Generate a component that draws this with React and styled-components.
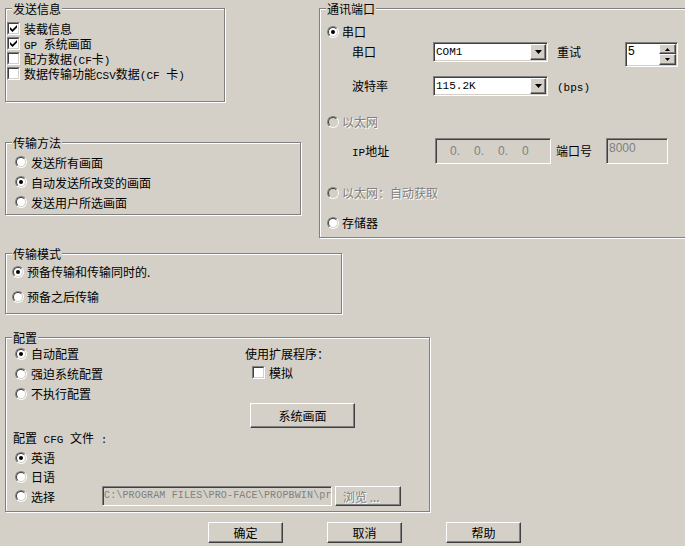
import React from 'react';
import styled, { createGlobalStyle, css } from 'styled-components';

const BG = '#d4d0c8';

const Global = createGlobalStyle`
  html, body { margin: 0; padding: 0; background: ${BG}; }
  body {
    font-family: "Noto Sans CJK SC", "Liberation Sans", sans-serif;
    font-size: 12px;
    color: #000;
  }
  * { box-sizing: border-box; }
`;

const Page = styled.div`
  width: 685px;
  height: 546px;
  overflow: hidden;
  padding: 8px 0 0 5px;
  display: flex;
  flex-direction: column;
  align-items: flex-start;
`;

const TopRow = styled.div`
  display: flex;
  align-items: flex-start;
  flex: none;
`;

const LeftCol = styled.div`
  display: flex;
  flex-direction: column;
  width: 296px;
  flex: none;
`;

const Group = styled.div`
  flex: none;
  width: ${p => p.$w}px;
  height: ${p => p.$h}px;
  margin-top: ${p => p.$mt || 0}px;
  margin-left: ${p => p.$ml || 0}px;
  border: 1px solid #808080;
  box-shadow: inset 1px 1px 0 #fff, 1px 1px 0 #fff;
  display: flex;
  flex-direction: column;
  align-items: flex-start;
`;

const Legend = styled.div`
  align-self: flex-start;
  margin: -8px 0 0 6px;
  padding: 0 1px;
  height: 15px;
  line-height: 15px;
  background: ${BG};
  white-space: nowrap;
`;

const List = styled.div`
  display: flex;
  flex-direction: column;
  gap: ${p => p.$gap || 0}px;
  padding: ${p => p.$pad || '0'};
`;

const Option = styled.label`
  display: flex;
  align-items: center;
  flex: none;
  gap: ${p => (p.$gap ?? 4)}px;
  height: ${p => p.$h || 15}px;
  width: ${p => (p.$w ? `${p.$w}px` : 'auto')};
  margin: ${p => p.$m || '0'};
  white-space: nowrap;
  color: ${p => (p.$disabled ? '#808080' : '#000')};
  text-shadow: ${p => (p.$disabled ? '1px 1px 0 #fff' : 'none')};
`;

const Text = styled.span`
  display: inline-block;
  height: 15px;
  line-height: 15px;
  overflow: hidden;
  white-space: nowrap;
`;

const Lat = styled.span`
  font-family: "Liberation Mono", monospace;
  font-size: 11px;
`;

const RadioOuter = styled.span`
  flex: none;
  width: 12px;
  height: 12px;
  border-radius: 50%;
  border: 1px solid;
  border-color: #808080 #fff #fff #808080;
  display: flex;
`;

const RadioInner = styled.span`
  flex: 1;
  border-radius: 50%;
  border: 1px solid;
  border-color: #404040 ${BG} ${BG} #404040;
  background: ${p => (p.$disabled ? BG : '#fff')};
  display: flex;
  align-items: center;
  justify-content: center;
`;

const Dot = styled.span`
  width: 4px;
  height: 4px;
  border-radius: 50%;
  background: #000;
`;

const CheckOuter = styled.span`
  flex: none;
  width: 13px;
  height: 13px;
  border: 1px solid;
  border-color: #808080 #fff #fff #808080;
  display: flex;
`;

const CheckInner = styled.span`
  flex: 1;
  border: 1px solid;
  border-color: #404040 ${BG} ${BG} #404040;
  background: #fff;
  display: flex;
  align-items: center;
  justify-content: center;
`;

const sunken = css`
  border: 1px solid;
  border-color: #808080 #fff #fff #808080;
  box-shadow: inset 1px 1px 0 #404040, inset -1px -1px 0 ${BG};
`;

const raised = css`
  border: 1px solid;
  border-color: #fff #404040 #404040 #fff;
  box-shadow: inset -1px -1px 0 #808080;
  background: ${BG};
`;

const Field = styled.div`
  ${sunken};
  flex: none;
  width: ${p => p.$w}px;
  height: ${p => p.$h}px;
  margin-left: ${p => p.$ml || 0}px;
  background: ${p => (p.$disabled ? BG : '#fff')};
  padding: 1px;
  display: flex;
  overflow: hidden;
`;

const ComboText = styled.div`
  flex: 1;
  padding-left: 1px;
  font-family: "Liberation Mono", monospace;
  font-size: 11px;
  line-height: 16px;
`;

const DropBtn = styled.div`
  ${raised};
  flex: none;
  width: 16px;
  height: 16px;
  display: flex;
  align-items: center;
  justify-content: center;
`;

const SpinText = styled.div`
  flex: 1;
  padding: 1px 0 0 1px;
  font-family: "Liberation Sans", sans-serif;
  font-size: 12px;
  line-height: 13px;
`;

const SpinBtns = styled.div`
  flex: none;
  width: 17px;
  display: flex;
  flex-direction: column;
`;

const SpinBtn = styled.div`
  ${raised};
  height: ${p => p.$h}px;
  display: flex;
  align-items: center;
  justify-content: center;
`;

const GrayText = styled.div`
  color: #808080;
  font-family: "Liberation Sans", sans-serif;
  font-size: 12px;
  line-height: 14px;
  padding: ${p => p.$pad || '0'};
  white-space: nowrap;
`;

const IpSegs = styled.div`
  display: flex;
  align-items: center;
  padding-left: 13px;
`;

const IpSeg = styled.span`
  width: 24px;
  color: #808080;
  font-family: "Liberation Sans", sans-serif;
  font-size: 12px;
  line-height: 20px;
`;

const PathText = styled.div`
  color: #808080;
  font-family: "Liberation Mono", monospace;
  font-size: 10px;
  letter-spacing: 0.15px;
  line-height: 16px;
  white-space: nowrap;
`;

const FieldRow = styled.div`
  display: flex;
  align-items: ${p => p.$align || 'flex-start'};
  margin: ${p => p.$m || '0'};
  flex: none;
`;

const FieldLabel = styled.div`
  flex: none;
  width: ${p => (p.$w ? `${p.$w}px` : 'auto')};
  margin-left: ${p => p.$ml || 0}px;
  height: 20px;
  line-height: 20px;
  white-space: nowrap;
`;

const Button = styled.button`
  ${raised};
  flex: none;
  width: ${p => p.$w}px;
  height: ${p => p.$h}px;
  margin: ${p => p.$m || '0'};
  padding: ${p => p.$pad || '0'};
  font-family: "Noto Sans CJK SC", sans-serif;
  font-size: 12px;
  color: ${p => (p.$disabled ? '#808080' : '#000')};
  text-shadow: ${p => (p.$disabled ? '1px 1px 0 #fff' : 'none')};
  display: flex;
  align-items: center;
  justify-content: ${p => p.$justify || 'center'};
  line-height: 15px;
  border-radius: 0;
  cursor: default;
`;

const ConfigTop = styled.div`
  display: grid;
  grid-template-columns: 239px auto;
  align-items: start;
  margin-top: 1px;
`;

const ExtPanel = styled.div`
  display: flex;
  flex-direction: column;
  align-items: flex-start;
`;

const PlainLabel = styled.div`
  height: 15px;
  line-height: 15px;
  margin: ${p => p.$m || '0'};
  white-space: nowrap;
`;

const CfgList = styled.div`
  display: flex;
  flex-direction: column;
  padding-left: 9px;
  margin-top: 3px;
`;

const PathRow = styled.div`
  display: flex;
  align-items: center;
  height: 20px;
`;

const ButtonRow = styled.div`
  display: flex;
  gap: 44px;
  margin: 10px 0 0 203px;
`;

const Radio = ({ checked, disabled }) => (
  <RadioOuter>
    <RadioInner $disabled={disabled}>{checked && <Dot />}</RadioInner>
  </RadioOuter>
);

const Check = ({ checked }) => (
  <CheckOuter>
    <CheckInner>
      {checked && (
        <svg width="7" height="7" viewBox="0 0 7 7">
          <polygon points="0,2 2.5,4.5 7,0 7,2.5 2.5,7 0,4.5" fill="#000" />
        </svg>
      )}
    </CheckInner>
  </CheckOuter>
);

const DownArrow = () => (
  <svg width="7" height="4" viewBox="0 0 7 4">
    <polygon points="0,0 7,0 3.5,4" fill="#000" />
  </svg>
);

const SmallArrow = ({ up }) => (
  <svg width="5" height="3" viewBox="0 0 5 3">
    <polygon points={up ? '0,3 5,3 2.5,0' : '0,0 5,0 2.5,3'} fill="#000" />
  </svg>
);

const Combo = ({ value }) => (
  <Field $w={115} $h={20}>
    <ComboText>{value}</ComboText>
    <DropBtn>
      <DownArrow />
    </DropBtn>
  </Field>
);

const Spin = ({ value }) => (
  <Field $w={53} $h={25}>
    <SpinText>{value}</SpinText>
    <SpinBtns>
      <SpinBtn $h={10}>
        <SmallArrow up />
      </SpinBtn>
      <SpinBtn $h={11}>
        <SmallArrow />
      </SpinBtn>
    </SpinBtns>
  </Field>
);

export default function App() {
  return (
    <>
      <Global />
      <Page>
        <TopRow>
          <LeftCol>
            <Group $w={220} $h={94}>
              <Legend>发送信息</Legend>
              <List $pad="5px 0 0 1px">
                <Option>
                  <Check checked />
                  <Text>装载信息</Text>
                </Option>
                <Option>
                  <Check checked />
                  <Text>
                    <Lat>GP </Lat>系统画面
                  </Text>
                </Option>
                <Option>
                  <Check />
                  <Text>
                    配方数据<Lat>(CF</Lat>卡<Lat>)</Lat>
                  </Text>
                </Option>
                <Option>
                  <Check />
                  <Text>
                    数据传输功能<Lat>CSV</Lat>数据<Lat>(CF </Lat>卡<Lat>)</Lat>
                  </Text>
                </Option>
              </List>
            </Group>

            <Group $w={296} $h={73} $mt={40}>
              <Legend>传输方法</Legend>
              <List $pad="2px 0 0 9px">
                <Option $h={20}>
                  <Radio />
                  <Text>发送所有画面</Text>
                </Option>
                <Option $h={20}>
                  <Radio checked />
                  <Text>自动发送所改变的画面</Text>
                </Option>
                <Option $h={20}>
                  <Radio />
                  <Text>发送用户所选画面</Text>
                </Option>
              </List>
            </Group>
          </LeftCol>

          <Group $w={372} $h={230} $ml={18}>
            <Legend>通讯端口</Legend>
            <Option $m="8px 0 0 7px" $gap={3}>
              <Radio checked />
              <Text>串口</Text>
            </Option>
            <FieldRow $m="3px 0 0 32px">
              <FieldLabel $w={81}>串口</FieldLabel>
              <Combo value="COM1" />
              <FieldLabel $w={68} $ml={9}>重试</FieldLabel>
              <Spin value="5" />
            </FieldRow>
            <FieldRow $m="9px 0 0 32px">
              <FieldLabel $w={81}>波特率</FieldLabel>
              <Combo value="115.2K" />
              <FieldLabel $ml={9}>
                <Lat>(bps)</Lat>
              </FieldLabel>
            </FieldRow>
            <Option $m="18px 0 0 7px" $gap={3} $disabled>
              <Radio disabled />
              <Text>以太网</Text>
            </Option>
            <FieldRow $m="9px 0 0 32px" $align="center">
              <FieldLabel $w={83}>
                <Lat>IP</Lat>地址
              </FieldLabel>
              <Field $w={116} $h={26} $disabled>
                <IpSegs>
                  <IpSeg>0.</IpSeg>
                  <IpSeg>0.</IpSeg>
                  <IpSeg>0.</IpSeg>
                  <IpSeg>0</IpSeg>
                </IpSegs>
              </Field>
              <FieldLabel $w={50} $ml={5}>端口号</FieldLabel>
              <Field $w={62} $h={26} $disabled>
                <GrayText $pad="1px 0 0 1px">8000</GrayText>
              </Field>
            </FieldRow>
            <Option $m="21px 0 0 7px" $gap={3} $disabled>
              <Radio disabled />
              <Text>以太网：自动获取</Text>
            </Option>
            <Option $m="15px 0 0 7px" $gap={3}>
              <Radio />
              <Text>存储器</Text>
            </Option>
          </Group>
        </TopRow>

        <Group $w={337} $h={61} $mt={15}>
          <Legend>传输模式</Legend>
          <List $gap={10} $pad="3px 0 0 6px">
            <Option $gap={3}>
              <Radio checked />
              <Text>预备传输和传输同时的.</Text>
            </Option>
            <Option $gap={3}>
              <Radio />
              <Text>预备之后传输</Text>
            </Option>
          </List>
        </Group>

        <Group $w={425} $h={175} $mt={23}>
          <Legend>配置</Legend>
          <ConfigTop>
            <List $gap={5} $pad="0 0 0 9px">
              <Option>
                <Radio checked />
                <Text>自动配置</Text>
              </Option>
              <Option>
                <Radio />
                <Text>强迫系统配置</Text>
              </Option>
              <Option>
                <Radio />
                <Text>不执行配置</Text>
              </Option>
            </List>
            <ExtPanel>
              <PlainLabel>使用扩展程序：</PlainLabel>
              <Option $m="4px 0 0 7px">
                <Check />
                <Text>模拟</Text>
              </Option>
              <Button $w={105} $h={25} $m="23px 0 0 5px">
                系统画面
              </Button>
            </ExtPanel>
          </ConfigTop>
          <PlainLabel $m="2px 0 0 7px">
            配置<Lat> CFG </Lat>文件<Lat> :</Lat>
          </PlainLabel>
          <CfgList>
            <Option $h={19}>
              <Radio checked />
              <Text>英语</Text>
            </Option>
            <Option $h={19}>
              <Radio />
              <Text>日语</Text>
            </Option>
            <PathRow>
              <Option $w={87} $h={20}>
                <Radio />
                <Text>选择</Text>
              </Option>
              <Field $w={230} $h={20} $disabled>
                <PathText>C:\PROGRAM FILES\PRO-FACE\PROPBWIN\pr</PathText>
              </Field>
              <Button $w={66} $h={20} $m="0 0 0 3px" $pad="0 0 0 7px" $justify="flex-start" $disabled>
                浏览 ...
              </Button>
            </PathRow>
          </CfgList>
        </Group>

        <ButtonRow>
          <Button $w={75} $h={21}>确定</Button>
          <Button $w={75} $h={21}>取消</Button>
          <Button $w={75} $h={21}>帮助</Button>
        </ButtonRow>
      </Page>
    </>
  );
}
